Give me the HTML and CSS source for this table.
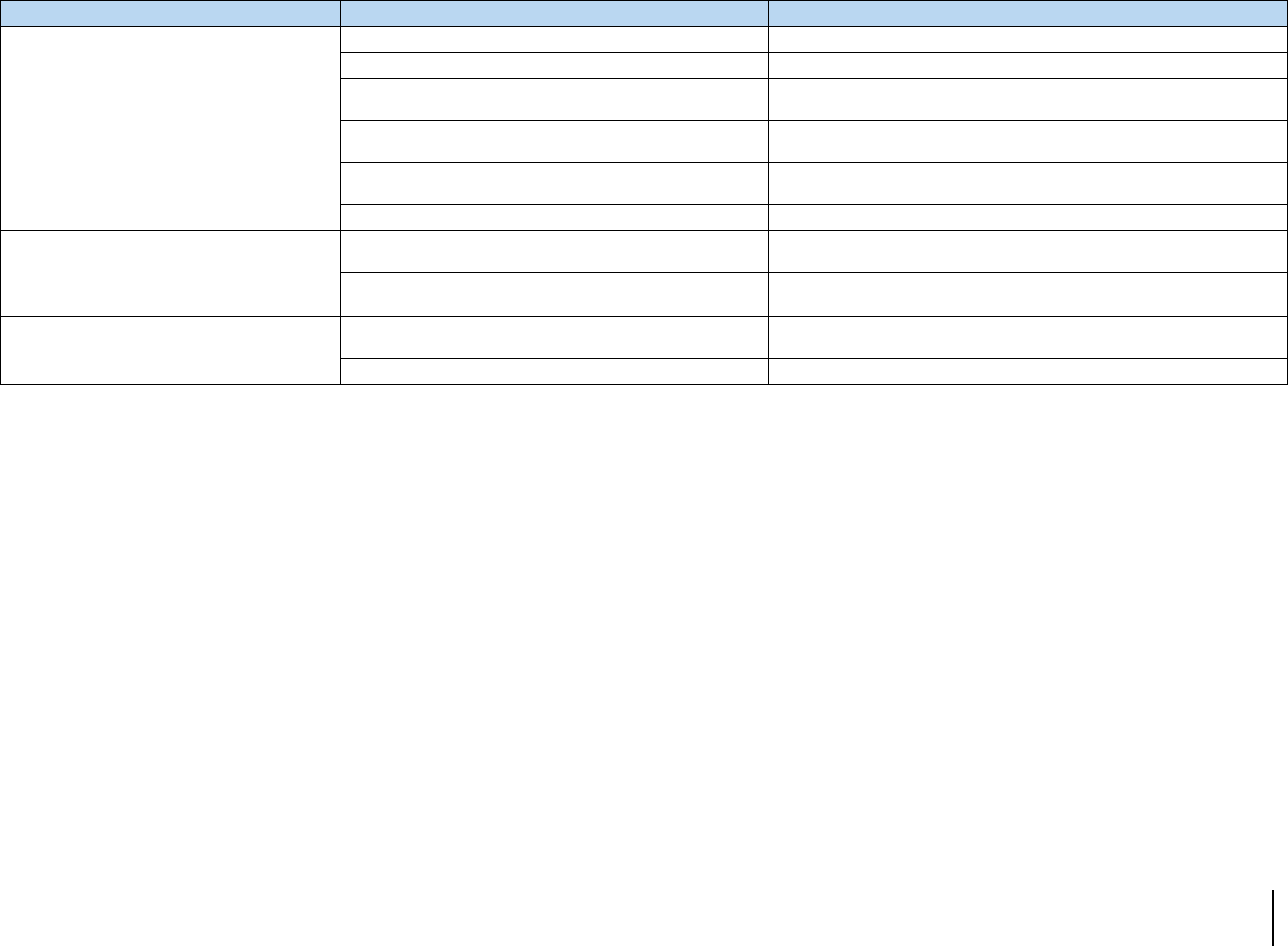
FILE: index.html
```html
<!DOCTYPE html>
<html lang="en">
<head>
    <meta charset="UTF-8">
    <meta name="viewport" content="width=device-width, initial-scale=1.0">
    <title>Table</title>
    <link rel="stylesheet" href="styles.css">
</head>
<body>
    <table class="grid">
        <colgroup>
            <col class="col-a">
            <col class="col-b">
            <col class="col-c">
        </colgroup>
        <thead>
            <tr class="head">
                <th></th>
                <th></th>
                <th></th>
            </tr>
        </thead>
        <tbody>
            <tr class="short">
                <td rowspan="6"></td>
                <td></td>
                <td></td>
            </tr>
            <tr class="short"><td></td><td></td></tr>
            <tr class="tall"><td></td><td></td></tr>
            <tr class="tall"><td></td><td></td></tr>
            <tr class="tall"><td></td><td></td></tr>
            <tr class="short"><td></td><td></td></tr>
            <tr class="tall">
                <td rowspan="2"></td>
                <td></td>
                <td></td>
            </tr>
            <tr class="taller"><td></td><td></td></tr>
            <tr class="tall">
                <td rowspan="2"></td>
                <td></td>
                <td></td>
            </tr>
            <tr class="short"><td></td><td></td></tr>
        </tbody>
    </table>
    <div class="edge-mark"></div>
</body>
</html>
```

FILE: styles.css
```css
body {
    margin: 0;
    font-family: "Liberation Sans", Arial, sans-serif;
    background: #fff;
    color: #000;
}
.grid {
    border-collapse: collapse;
    table-layout: fixed;
    width: 1287px;
}
.col-a {
    width: 340px;
}
.col-b {
    width: 428px;
}
.col-c {
    width: 519px;
}
th, td {
    border: 1px solid #000;
    padding: 0;
}
.head {
    background: #bad7f1;
    height: 26px;
}
.short {
    height: 26px;
}
.tall {
    height: 42px;
}
.taller {
    height: 44px;
}
.edge-mark {
    width: 2px;
    height: 56px;
    background: #000;
    margin-top: 505px;
    margin-left: 1272px;
}
```
